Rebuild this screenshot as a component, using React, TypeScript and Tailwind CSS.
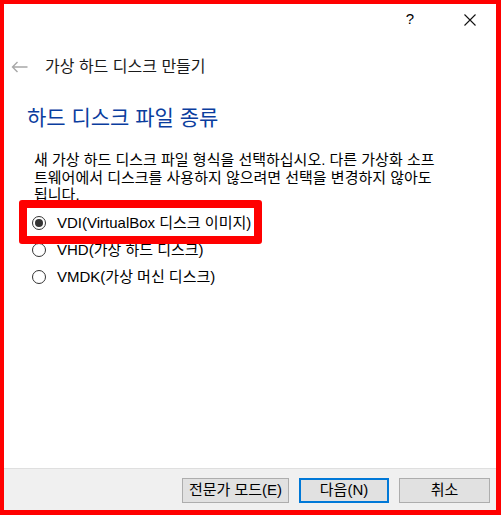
import React from 'react'

const font = { fontFamily: '"Liberation Sans", "Noto Sans CJK KR", sans-serif' }

function Radio({ checked, label }: { checked?: boolean; label: string }) {
  return (
    <div className="flex h-[27px] items-center">
      <span className="flex h-[14px] w-[14px] items-center justify-center rounded-full border border-[#333333] bg-white">
        {checked && <span className="h-[8px] w-[8px] rounded-full bg-[#333333]" />}
      </span>
      <span className="ml-[11px] text-[15px] text-black">{label}</span>
    </div>
  )
}

function Button({ label, width, primary }: { label: string; width: string; primary?: boolean }) {
  return (
    <button
      className={
        'flex h-[25px] items-center justify-center bg-[#e1e1e1] text-[15px] text-black ' +
        width +
        (primary ? ' border-2 border-[#0078d7]' : ' border border-[#adadad]')
      }
    >
      {label}
    </button>
  )
}

export default function App() {
  return (
    <div
      className="relative flex h-[515px] w-[501px] flex-col border-t-4 border-l-4 border-r-[5px] border-b-[5px] border-[#ff0000] bg-white"
      style={font}
    >
      {/* title bar */}
      <div className="flex h-[31px] items-center justify-end text-black">
        <span className="mr-[50px] text-[15px]">?</span>
        <svg width="12" height="12" viewBox="0 0 12 12" className="mr-[20px]">
          <path d="M0.5 0.5 L11.5 11.5 M11.5 0.5 L0.5 11.5" stroke="#111" strokeWidth="1.1" />
        </svg>
      </div>

      {/* wizard nav */}
      <div className="flex h-[64px] items-center">
        <svg width="17" height="12" viewBox="0 0 17 12" className="ml-[7px]">
          <path d="M16.5 6 H1.5 M6.5 1 L1.5 6 L6.5 11" stroke="#a8a8a8" strokeWidth="1.4" fill="none" />
        </svg>
        <span className="ml-[17px] text-[16px] text-[#1a1a1a]">가상 하드 디스크 만들기</span>
      </div>

      {/* page */}
      <div className="flex flex-1 flex-col pl-[23px]">
        <h1 className="mt-[6px] text-[21px] leading-[26px] text-[#0a3d9e]">하드 디스크 파일 종류</h1>
        <p className="ml-[7px] mt-[20px] text-[15px] leading-[17.5px] text-black">
          새 가상 하드 디스크 파일 형식을 선택하십시오. 다른 가상화 소프
          <br />
          트웨어에서 디스크를 사용하지 않으려면 선택을 변경하지 않아도
          <br />
          됩니다.
        </p>
        <div className="ml-[5px] mt-[6px] flex flex-col">
          <Radio checked label="VDI(VirtualBox 디스크 이미지)" />
          <Radio label="VHD(가상 하드 디스크)" />
          <Radio label="VMDK(가상 머신 디스크)" />
        </div>
      </div>

      {/* footer */}
      <div className="flex h-[42px] justify-end gap-[10px] border-t border-[#dfdfdf] bg-[#f0f0f0] pr-[6px] pt-[9px]">
        <Button label="전문가 모드(E)" width="w-[107px]" />
        <Button label="다음(N)" width="w-[90px]" primary />
        <Button label="취소" width="w-[91px]" />
      </div>

      {/* highlight annotation */}
      <div className="absolute left-[15px] top-[196px] h-[44px] w-[243px] rounded-[3px] border-[8px] border-[#ff0000]" />
    </div>
  )
}
